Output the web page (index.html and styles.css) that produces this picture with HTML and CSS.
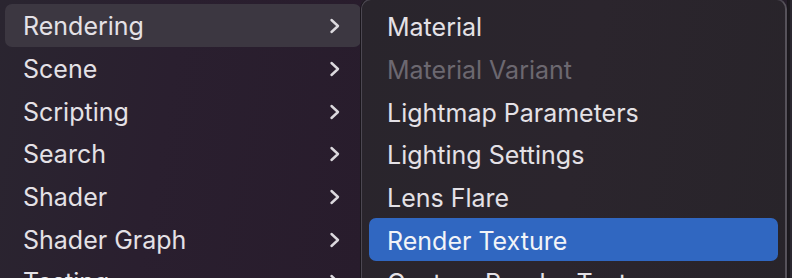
FILE: index.html
```html
<!DOCTYPE html>
<html>
<head>
<meta charset="utf-8">
<link rel="stylesheet" href="styles.css">
</head>
<body>
<div class="screen">
  <div class="menu">
    <div class="item active"><span>Rendering</span><svg class="chev" viewBox="0 0 12 16"><path d="M2.5 2 L9 8 L2.5 14"/></svg></div>
    <div class="item"><span>Scene</span><svg class="chev" viewBox="0 0 12 16"><path d="M2.5 2 L9 8 L2.5 14"/></svg></div>
    <div class="item"><span>Scripting</span><svg class="chev" viewBox="0 0 12 16"><path d="M2.5 2 L9 8 L2.5 14"/></svg></div>
    <div class="item"><span>Search</span><svg class="chev" viewBox="0 0 12 16"><path d="M2.5 2 L9 8 L2.5 14"/></svg></div>
    <div class="item"><span>Shader</span><svg class="chev" viewBox="0 0 12 16"><path d="M2.5 2 L9 8 L2.5 14"/></svg></div>
    <div class="item"><span>Shader Graph</span><svg class="chev" viewBox="0 0 12 16"><path d="M2.5 2 L9 8 L2.5 14"/></svg></div>
    <div class="item"><span>Testing</span><svg class="chev" viewBox="0 0 12 16"><path d="M2.5 2 L9 8 L2.5 14"/></svg></div>
  </div>
  <div class="submenu">
    <div class="item"><span>Material</span></div>
    <div class="item disabled"><span>Material Variant</span></div>
    <div class="item"><span>Lightmap Parameters</span></div>
    <div class="item"><span>Lighting Settings</span></div>
    <div class="item"><span>Lens Flare</span></div>
    <div class="item selected"><span>Render Texture</span></div>
    <div class="item"><span>Custom Render Texture</span></div>
  </div>
  <div class="edge"></div>
</div>
</body>
</html>
```
FILE: styles.css
```css
html, body {
  margin: 0;
  padding: 0;
}
body {
  width: 792px;
  height: 278px;
  overflow: hidden;
  background: #261e2a;
  font-family: Inter, "Noto Sans", sans-serif;
  font-size: 25px;
  color: #e4e1e6;
}
.screen {
  display: flex;
  height: 278px;
  overflow: hidden;
}
.menu {
  width: 356px;
  padding: 4px 0 0 5px;
  flex: none;
  background: linear-gradient(100deg, #2a2530 0%, #2a1f2f 45%, #281c2c 100%);
}
.item {
  height: 42.65px;
  flex: none;
  display: flex;
  align-items: center;
  justify-content: space-between;
  padding: 2px 20px 0 18px;
  box-sizing: border-box;
  border-radius: 7px;
  white-space: nowrap;
}
.menu .item.active {
  background: #3c3741;
}
.chev {
  width: 12px;
  height: 16px;
  fill: none;
  stroke: #dcd9de;
  stroke-width: 2.4;
  stroke-linecap: round;
  stroke-linejoin: round;
}
.submenu {
  width: 426px;
  flex: none;
  margin-top: -1px;
  height: 300px;
  box-sizing: border-box;
  border: 1px solid #4c4852;
  border-right: 2px solid #56525a;
  border-radius: 10px 10px 0 0;
  padding: 5px 7px 0 7px;
  background: linear-gradient(100deg, #29252c 0%, #2b252d 50%, #28242a 100%);
  box-shadow: -1px 0 0 #1a161c;
}
.submenu .item {
  padding-left: 18px;
}
.submenu .item.disabled {
  color: #6c6870;
}
.submenu .item.selected {
  background: #3067c1;
  color: #f2f4f8;
}
.edge {
  flex: 1;
  background: #1d1a1f;
  border-left: 1px solid #1a171c;
  box-shadow: inset -2px 0 0 #2b2830;
}
```
